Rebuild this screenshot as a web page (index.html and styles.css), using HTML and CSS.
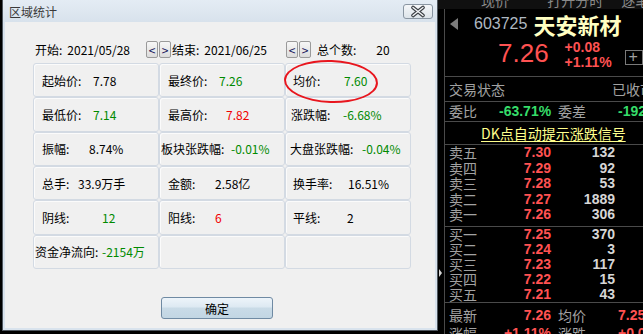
FILE: index.html
```html
<!DOCTYPE html>
<html lang="zh-CN">
<head>
  <meta charset="UTF-8">
  <meta name="viewport" content="width=device-width, initial-scale=1.0">
  <title>区域统计</title>
  <link rel="stylesheet" href="styles.css">
</head>
<body>
  <div class="screen">
    <!-- Range statistics dialog -->
    <div class="dialog">
      <div class="titlebar">
        <span class="title">区域统计</span>
        <button class="close" aria-label="关闭">
          <svg width="28" height="13" viewBox="0 0 28 13">
            <path d="M9 2.5 L19 10.5 M19 2.5 L9 10.5" stroke="#3b3f44" stroke-width="3.6" stroke-linecap="round" fill="none"/>
            <path d="M9 2.5 L19 10.5 M19 2.5 L9 10.5" stroke="#f4f6f8" stroke-width="1.4" stroke-linecap="round" fill="none"/>
          </svg>
        </button>
      </div>

      <div class="dialog-body">
        <div class="content">
          <div class="range">
            <span class="range-item range-start"><span>开始:</span><span class="date">2021/05/28</span></span>
            <span class="stepper"><button>&lt;</button><button>&gt;</button></span>
            <span class="range-item range-end"><span>结束:</span><span class="date">2021/06/25</span></span>
            <span class="stepper"><button>&lt;</button><button>&gt;</button></span>
            <span class="count-label">总个数:</span>
            <span class="count">20</span>
          </div>

          <div class="stats">
            <div class="cell"><span class="k">起始价:</span><span class="v">7.78</span></div>
            <div class="cell"><span class="k">最终价:</span><span class="v down">7.26</span></div>
            <div class="cell c3 marked">
              <span class="k">均价:</span><span class="v down">7.60</span>
              <span class="ring"></span>
            </div>

            <div class="cell"><span class="k">最低价:</span><span class="v down">7.14</span></div>
            <div class="cell"><span class="k kw-58">最高价:</span><span class="v up">7.82</span></div>
            <div class="cell c3 p5"><span class="k kw-52">涨跌幅:</span><span class="v down">-6.68%</span></div>

            <div class="cell"><span class="k kw-47">振幅:</span><span class="v">8.74%</span></div>
            <div class="cell p1"><span class="k kw-70">板块张跌幅:</span><span class="v down">-0.01%</span></div>
            <div class="cell p4"><span class="k kw-72">大盘张跌幅:</span><span class="v down">-0.04%</span></div>

            <div class="cell"><span class="k kw-36">总手:</span><span class="v">33.9万手</span></div>
            <div class="cell"><span class="k kw-47">金额:</span><span class="v">2.58亿</span></div>
            <div class="cell c3"><span class="k kw-55">换手率:</span><span class="v">16.51%</span></div>

            <div class="cell"><span class="k kw-60">阴线:</span><span class="v down">12</span></div>
            <div class="cell"><span class="k kw-47">阳线:</span><span class="v up">6</span></div>
            <div class="cell c3"><span class="k kw-54">平线:</span><span class="v">2</span></div>

            <div class="cell p1"><span class="k kw-67">资金净流向:</span><span class="v down">-2154万</span></div>
            <div class="cell"></div>
            <div class="cell"></div>
          </div>

          <button class="ok">确定</button>
        </div>
      </div>
    </div>

    <!-- Quote panel -->
    <div class="quote">
      <div class="quote-tabs">
        <span class="tab-a">现价</span>
        <span class="tab-b">打开分时</span>
        <span class="tab-c">逐笔</span>
      </div>

      <div class="quote-main">
        <div class="gutter"><span class="gutter-mark"></span></div>

        <div class="quote-body">
          <div class="q-head">
            <span class="q-back"></span>
            <span class="q-code">603725</span>
            <span class="q-name">天安新材</span>
          </div>

          <div class="q-price">
            <span class="q-last">7.26</span>
            <span class="q-change">
              <span>+0.08</span>
              <span>+1.11%</span>
            </span>
            <span class="q-plus">+</span>
          </div>

          <div class="q-status">
            <span class="q-label">交易状态</span>
            <span class="q-label q-state">已收市</span>
          </div>

          <div class="q-pair q-ratio">
            <span class="q-label">委比</span>
            <span class="num green">-63.71%</span>
            <span class="q-label second">委差</span>
            <span class="num green left">-1923</span>
          </div>

          <div class="q-signal"><span>DK点自动提示涨跌信号</span></div>

          <div class="book sell">
            <div class="book-row"><span class="q-label">卖五</span><span class="num red">7.30</span><span class="num vol">132</span></div>
            <div class="book-row"><span class="q-label">卖四</span><span class="num red">7.29</span><span class="num vol">92</span></div>
            <div class="book-row"><span class="q-label">卖三</span><span class="num red">7.28</span><span class="num vol">53</span></div>
            <div class="book-row"><span class="q-label">卖二</span><span class="num red">7.27</span><span class="num vol">1889</span></div>
            <div class="book-row"><span class="q-label">卖一</span><span class="num red">7.26</span><span class="num vol">306</span></div>
          </div>

          <div class="book buy">
            <div class="book-row"><span class="q-label">买一</span><span class="num red">7.25</span><span class="num vol">370</span></div>
            <div class="book-row"><span class="q-label">买二</span><span class="num red">7.24</span><span class="num vol">3</span></div>
            <div class="book-row"><span class="q-label">买三</span><span class="num red">7.23</span><span class="num vol">117</span></div>
            <div class="book-row"><span class="q-label">买四</span><span class="num red">7.22</span><span class="num vol">15</span></div>
            <div class="book-row"><span class="q-label">买五</span><span class="num red">7.21</span><span class="num vol">43</span></div>
          </div>

          <div class="q-foot">
            <div class="q-pair">
              <span class="q-label">最新</span>
              <span class="num red">7.26</span>
              <span class="q-label second">均价</span>
              <span class="num red left">7.25</span>
            </div>
            <div class="q-pair">
              <span class="q-label">涨幅</span>
              <span class="num red">+1.11%</span>
              <span class="q-label second">涨跌</span>
              <span class="num red left">+0.08</span>
            </div>
          </div>
        </div>
      </div>
    </div>
  </div>
</body>
</html>
```

FILE: styles.css
```css
* {
  box-sizing: border-box;
}
body {
  margin: 0;
  background: #000;
  font-family: "Noto Sans CJK SC", "Liberation Sans", sans-serif;
  font-size: 12px;
  overflow: hidden;
}
.screen {
  display: flex;
  width: 643px;
  height: 334px;
  overflow: hidden;
}

/* dialog */
.dialog {
  width: 436px;
  height: 331px;
  margin-left: 2px;
  flex: none;
  display: flex;
  flex-direction: column;
  background: #d9e3ed;
  border: 1px solid #4e565e;
  border-top: none;
}
.titlebar {
  height: 22px;
  display: flex;
  align-items: center;
  padding-left: 6px;
  background: linear-gradient(#e4ecf4, #d8e2ec);
}
.title {
  color: #3a3a3a;
  font-size: 12px;
}
.close {
  margin-left: auto;
  margin-right: 4px;
  width: 30px;
  height: 15px;
  padding: 0;
  border: 1px solid #8a96a2;
  border-radius: 3px;
  background: linear-gradient(#f5f7f9, #dde4ea);
  display: flex;
  align-items: center;
  justify-content: center;
}
.close svg {
  display: block;
}
.dialog-body {
  flex: 1;
  margin: 0 2px 2px;
  background: #f0f0f0;
}
.content {
  margin-left: 28px;
  padding-top: 19px;
  width: 378px;
}

.range {
  display: flex;
  align-items: center;
  height: 17px;
  padding-left: 2px;
  color: #000;
}
.range-item {
  display: flex;
  align-items: center;
}
.range-start {
  width: 111px;
}
.range-end {
  width: 114px;
  margin-left: 1px;
}
.date {
  margin-left: 5px;
}
.stepper {
  display: flex;
  gap: 1px;
}
.stepper button {
  width: 12px;
  height: 17px;
  padding: 0;
  border: 1px solid #9a9a9a;
  border-radius: 2px;
  background: linear-gradient(#f7f7f7, #dcdcdc);
  font-family: "Noto Sans CJK SC", sans-serif;
  font-size: 12px;
  line-height: 14px;
  color: #14145a;
}
.count-label {
  margin-left: 6px;
}
.count {
  margin-left: 20px;
}

.stats {
  margin-top: 5px;
  display: grid;
  grid-template-columns: repeat(3, 126px);
  grid-template-rows: repeat(6, 1fr);
  height: 206px;
}
.cell {
  display: flex;
  align-items: center;
  padding-left: 8px;
  border: 1px solid #d3dae3;
  border-radius: 3px;
  box-shadow: inset 1px 1px 0 #fbfbfb;
  color: #000;
  white-space: nowrap;
}
.cell.c3 {
  padding-left: 7px;
}
.cell.p1 {
  padding-left: 1px;
}
.cell.p4 {
  padding-left: 4px;
}
.cell.p5 {
  padding-left: 5px;
}
.k {
  display: inline-block;
  width: 51px;
}
.kw-36 { width: 36px; }
.kw-47 { width: 47px; }
.kw-52 { width: 52px; }
.kw-54 { width: 54px; }
.kw-55 { width: 55px; }
.kw-58 { width: 58px; }
.kw-60 { width: 60px; }
.kw-67 { width: 67px; }
.kw-70 { width: 70px; }
.kw-72 { width: 72px; }
.v.down {
  color: #008a00;
}
.v.up {
  color: #f00000;
}
.marked {
  position: relative;
}
.ring {
  position: absolute;
  left: -2px;
  top: -4px;
  width: 94px;
  height: 43px;
  border: 2.5px solid #e8161e;
  border-radius: 50%;
  transform: rotate(2deg);
}

.ok {
  display: block;
  margin-top: 28px;
  margin-left: 128px;
  width: 112px;
  height: 22px;
  padding: 0;
  border: 1px solid #6f8aa3;
  border-radius: 3px;
  background: linear-gradient(#edf4fa 0%, #dde9f2 45%, #c9dbe7 50%, #c2d6e3 100%);
  font-family: "Noto Sans CJK SC", sans-serif;
  font-size: 12px;
  color: #000;
}

/* quote panel */
.quote {
  flex: 1;
  display: flex;
  flex-direction: column;
  overflow: hidden;
  font-family: "Liberation Sans", "Noto Sans CJK SC", sans-serif;
}
.quote-tabs {
  flex: none;
  height: 9px;
  background: #101010;
  overflow: hidden;
  white-space: nowrap;
  font-family: "Noto Sans CJK SC", sans-serif;
  font-size: 14px;
  color: #8a8a8a;
  line-height: 14px;
}
.quote-tabs span {
  display: inline-block;
  margin-top: -7px;
  vertical-align: top;
}
.tab-a { margin-left: 43px; }
.tab-b { margin-left: 35px; }
.tab-c { margin-left: 15px; }
.quote-main {
  flex: 1;
  min-height: 0;
  display: flex;
}
.gutter {
  width: 6px;
  padding-top: 260px;
}
.gutter-mark {
  display: block;
  width: 0;
  height: 0;
  margin-left: 1px;
  border-left: 3px solid #d8d8d8;
  border-top: 4px solid transparent;
  border-bottom: 4px solid transparent;
}
.quote-body {
  flex: 1;
  border-left: 1px solid #4a4a4a;
  overflow: hidden;
  white-space: nowrap;
}
.q-head {
  height: 29px;
  display: flex;
  align-items: center;
}
.q-back {
  margin-left: 5px;
  width: 0;
  height: 0;
  border-right: 8px solid #7c7c7c;
  border-top: 6.5px solid transparent;
  border-bottom: 6.5px solid transparent;
}
.q-code {
  margin-left: 16px;
  font-size: 16px;
  color: #aeb8c2;
}
.q-name {
  margin-left: 6px;
  font-family: "Noto Sans CJK SC", sans-serif;
  font-size: 22px;
  font-weight: bold;
  line-height: 24px;
  color: #ffffc2;
}
.q-price {
  height: 38px;
  display: flex;
  align-items: flex-start;
  padding-top: 2px;
}
.q-last {
  margin-left: 53px;
  font-size: 26px;
  line-height: 26px;
  color: #ff5252;
}
.q-change {
  width: 63px;
  margin-left: 16px;
  display: flex;
  flex-direction: column;
  font-size: 14px;
  font-weight: bold;
  line-height: 15px;
  color: #ff5252;
}
.q-plus {
  margin-top: 10px;
  width: 18px;
  height: 15px;
  border: 1px solid #7a7a7a;
  color: #a0a0a0;
  font-size: 16px;
  line-height: 12px;
  padding-left: 2px;
}
.q-label {
  font-family: "Noto Sans CJK SC", sans-serif;
  font-size: 14px;
  line-height: 15px;
  color: #a2a2a2;
}
.q-label.second {
  padding-left: 7px;
}
.q-status {
  height: 25px;
  border-top: 1px solid #4a4a4a;
  display: flex;
  align-items: center;
  padding-left: 4px;
}
.q-state {
  margin-left: 107px;
}
.q-pair {
  display: grid;
  grid-template-columns: 50px 52px 60px 60px;
  align-items: center;
  padding-left: 4px;
  height: 18px;
}
.q-ratio {
  height: 20px;
  border-top: 1px solid #4a4a4a;
}
.num {
  font-size: 14px;
  font-weight: bold;
  line-height: 15px;
  text-align: right;
}
.num.left {
  text-align: left;
  padding-left: 7px;
}
.red {
  color: #ff5252;
}
.green {
  color: #36dd6a;
}
.vol {
  color: #d6d6d6;
}
.q-signal {
  height: 23px;
  border-top: 1px solid #4a4a4a;
  display: flex;
  align-items: center;
  padding-left: 36px;
}
.q-signal span {
  font-family: "Noto Sans CJK SC", sans-serif;
  font-size: 14px;
  line-height: 16px;
  color: #ffff8c;
  text-decoration: underline;
  text-underline-offset: 2px;
}
.book {
  border-top: 1px solid #4a4a4a;
}
.book.sell {
  height: 82px;
}
.book.buy {
  height: 76px;
}
.book-row {
  display: grid;
  grid-template-columns: 50px 52px 64px;
  align-items: center;
  padding-left: 4px;
  height: 15.5px;
}
.book.buy .book-row {
  height: 15px;
}
.q-foot {
  border-top: 1px solid #4a4a4a;
  padding-top: 3px;
}
```
